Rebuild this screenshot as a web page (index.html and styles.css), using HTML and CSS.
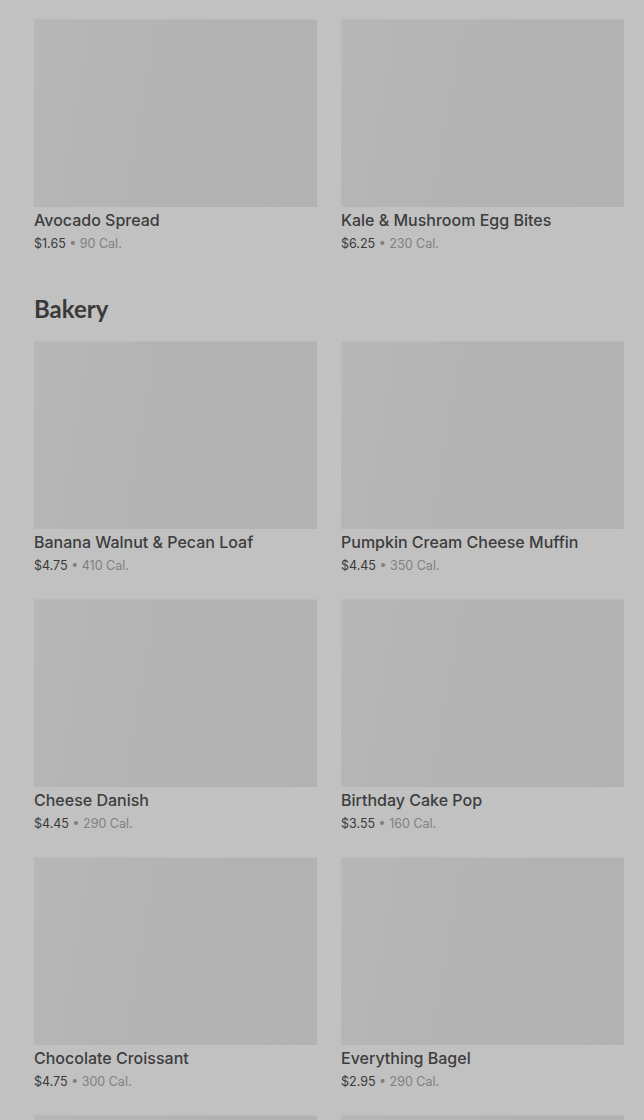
FILE: index.html
```html
<!DOCTYPE html>
<html lang="en">
<head>
    <meta charset="UTF-8">
    <meta name="viewport" content="width=device-width, initial-scale=1.0">
    <title>Menu</title>
    <link rel="stylesheet" href="styles.css">
</head>
<body>

<div class="menu">
    <!-- Breakfast (continued) -->
    <div class="section">
        <div class="grid">
            <div class="item">
                <div class="thumb"></div>
                <div class="item-name">Avocado Spread</div>
                <div class="item-meta"><span class="price">$1.65</span> • 90 Cal.</div>
            </div>
            <div class="item">
                <div class="thumb"></div>
                <div class="item-name">Kale &amp; Mushroom Egg Bites</div>
                <div class="item-meta"><span class="price">$6.25</span> • 230 Cal.</div>
            </div>
        </div>
    </div>

    <!-- Bakery -->
    <div class="section">
        <h2 class="section-title">Bakery</h2>
        <div class="grid">
            <div class="item">
                <div class="thumb"></div>
                <div class="item-name">Banana Walnut &amp; Pecan Loaf</div>
                <div class="item-meta"><span class="price">$4.75</span> • 410 Cal.</div>
            </div>
            <div class="item">
                <div class="thumb"></div>
                <div class="item-name">Pumpkin Cream Cheese Muffin</div>
                <div class="item-meta"><span class="price">$4.45</span> • 350 Cal.</div>
            </div>
            <div class="item">
                <div class="thumb"></div>
                <div class="item-name">Cheese Danish</div>
                <div class="item-meta"><span class="price">$4.45</span> • 290 Cal.</div>
            </div>
            <div class="item">
                <div class="thumb"></div>
                <div class="item-name">Birthday Cake Pop</div>
                <div class="item-meta"><span class="price">$3.55</span> • 160 Cal.</div>
            </div>
            <div class="item">
                <div class="thumb"></div>
                <div class="item-name">Chocolate Croissant</div>
                <div class="item-meta"><span class="price">$4.75</span> • 300 Cal.</div>
            </div>
            <div class="item">
                <div class="thumb"></div>
                <div class="item-name">Everything Bagel</div>
                <div class="item-meta"><span class="price">$2.95</span> • 290 Cal.</div>
            </div>
            <!-- next row, only the tops of the photos are in view -->
            <div class="item">
                <div class="thumb"></div>
            </div>
            <div class="item">
                <div class="thumb"></div>
            </div>
        </div>
    </div>
</div>

</body>
</html>
```

FILE: styles.css
```css
body {
    margin: 0;
    background-color: #c1c1c1; /* page dimmed behind an overlay */
    font-family: Inter, Roboto, "Noto Sans", Arial, sans-serif;
    color: #3b3b3b;
    overflow: hidden;
}
.menu {
    padding: 19px 20px 0 34px;
}
.section + .section {
    margin-top: 42px;
}
.section-title {
    font-family: Lato, "Noto Sans", sans-serif;
    font-size: 24px;
    font-weight: 700;
    line-height: 28px;
    margin: 0 0 18px;
    color: #393939;
}
.grid {
    display: grid;
    grid-template-columns: 283px 283px;
    column-gap: 24px;
    row-gap: 24px;
}
.thumb {
    height: 188px;
    background: linear-gradient(100deg, #b7b7b7 0%, #b3b3b3 45%, #b2b2b2 100%);
    border-top: 1px solid #bababa;
    box-sizing: border-box;
}
.item-name {
    margin-top: 3px;
    font-size: 16px;
    font-weight: 500;
    line-height: 20px;
    color: #3d3d3d;
}
.item-meta {
    margin-top: 5px;
    font-size: 12.5px;
    line-height: 18px;
    color: #808080;
}
.price {
    color: #3a3a3a;
}
```
